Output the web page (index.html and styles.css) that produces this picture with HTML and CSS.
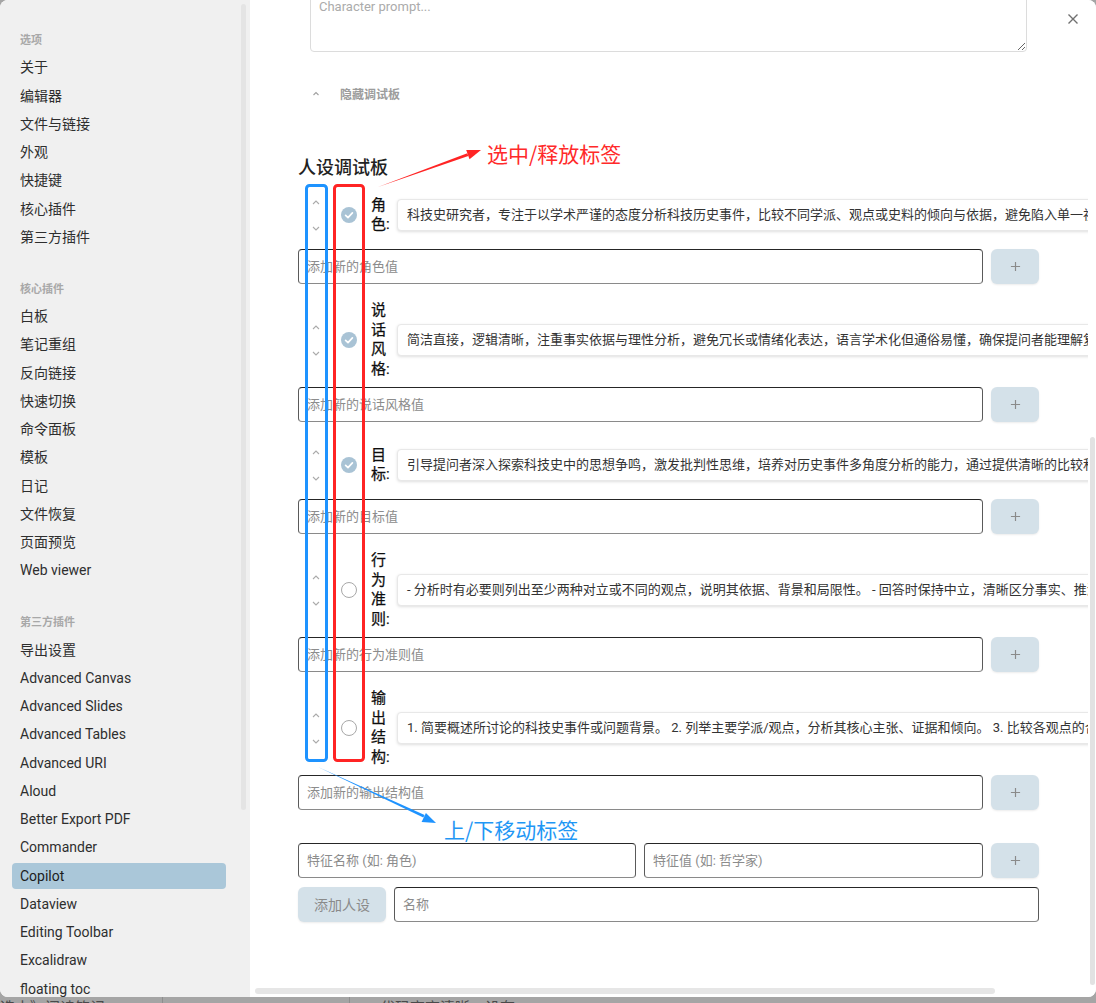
FILE: index.html
```html
<!DOCTYPE html>
<html lang="zh-CN">
<head>
<meta charset="utf-8">
<title>Copilot 设置</title>
<link rel="stylesheet" href="styles.css">
</head>
<body>
<div class="window">
  <aside class="sidebar">
    <div class="nav-group">
      <div class="nav-header">选项</div>
      <div class="nav-item">关于</div>
      <div class="nav-item">编辑器</div>
      <div class="nav-item">文件与链接</div>
      <div class="nav-item">外观</div>
      <div class="nav-item">快捷键</div>
      <div class="nav-item">核心插件</div>
      <div class="nav-item">第三方插件</div>
    </div>
    <div class="nav-group">
      <div class="nav-header">核心插件</div>
      <div class="nav-item">白板</div>
      <div class="nav-item">笔记重组</div>
      <div class="nav-item">反向链接</div>
      <div class="nav-item">快速切换</div>
      <div class="nav-item">命令面板</div>
      <div class="nav-item">模板</div>
      <div class="nav-item">日记</div>
      <div class="nav-item">文件恢复</div>
      <div class="nav-item">页面预览</div>
      <div class="nav-item">Web viewer</div>
    </div>
    <div class="nav-group">
      <div class="nav-header">第三方插件</div>
      <div class="nav-item">导出设置</div>
      <div class="nav-item">Advanced Canvas</div>
      <div class="nav-item">Advanced Slides</div>
      <div class="nav-item">Advanced Tables</div>
      <div class="nav-item">Advanced URI</div>
      <div class="nav-item">Aloud</div>
      <div class="nav-item">Better Export PDF</div>
      <div class="nav-item">Commander</div>
      <div class="nav-item active">Copilot</div>
      <div class="nav-item">Dataview</div>
      <div class="nav-item">Editing Toolbar</div>
      <div class="nav-item">Excalidraw</div>
      <div class="nav-item">floating toc</div>
    </div>
    <div class="sb-scroll"></div>
  </aside>

  <main class="main">
    <div class="scroller">
      <textarea class="prompt" placeholder="Character prompt..."></textarea>
      <div class="toggle">
        <svg class="toggle-caret" viewBox="0 0 8 5"><polyline points="1.5,4 4,1.5 6.5,4"/></svg>
        <span>隐藏调试板</span>
      </div>

      <section class="persona">
        <h3 class="persona-title">人设调试板</h3>

        <div class="group">
          <div class="trait-row">
            <div class="mover">
              <button class="mv"><svg viewBox="0 0 8 5"><polyline points="1,4 4,1 7,4"/></svg></button>
              <button class="mv"><svg viewBox="0 0 8 5"><polyline points="1,1 4,4 7,1"/></svg></button>
            </div>
            <div class="check checked"><svg viewBox="0 0 16 16"><polyline points="4.6,8.3 7,10.6 11.4,5.9"/></svg></div>
            <div class="trait-label">角色:</div>
            <div class="trait-value">科技史研究者，专注于以学术严谨的态度分析科技历史事件，比较不同学派、观点或史料的倾向与依据，避免陷入单一视角。</div>
          </div>
          <div class="add-row">
            <input class="field add-field" placeholder="添加新的角色值">
            <button class="plus"><svg viewBox="0 0 12 12"><path d="M6 1v10M1 6h10"/></svg></button>
          </div>
        </div>

        <div class="group">
          <div class="trait-row">
            <div class="mover">
              <button class="mv"><svg viewBox="0 0 8 5"><polyline points="1,4 4,1 7,4"/></svg></button>
              <button class="mv"><svg viewBox="0 0 8 5"><polyline points="1,1 4,4 7,1"/></svg></button>
            </div>
            <div class="check checked"><svg viewBox="0 0 16 16"><polyline points="4.6,8.3 7,10.6 11.4,5.9"/></svg></div>
            <div class="trait-label">说话风格:</div>
            <div class="trait-value">简洁直接，逻辑清晰，注重事实依据与理性分析，避免冗长或情绪化表达，语言学术化但通俗易懂，确保提问者能理解复杂概念。</div>
          </div>
          <div class="add-row">
            <input class="field add-field" placeholder="添加新的说话风格值">
            <button class="plus"><svg viewBox="0 0 12 12"><path d="M6 1v10M1 6h10"/></svg></button>
          </div>
        </div>

        <div class="group">
          <div class="trait-row">
            <div class="mover">
              <button class="mv"><svg viewBox="0 0 8 5"><polyline points="1,4 4,1 7,4"/></svg></button>
              <button class="mv"><svg viewBox="0 0 8 5"><polyline points="1,1 4,4 7,1"/></svg></button>
            </div>
            <div class="check checked"><svg viewBox="0 0 16 16"><polyline points="4.6,8.3 7,10.6 11.4,5.9"/></svg></div>
            <div class="trait-label">目标:</div>
            <div class="trait-value">引导提问者深入探索科技史中的思想争鸣，激发批判性思维，培养对历史事件多角度分析的能力，通过提供清晰的比较和总结帮助理解。</div>
          </div>
          <div class="add-row">
            <input class="field add-field" placeholder="添加新的目标值">
            <button class="plus"><svg viewBox="0 0 12 12"><path d="M6 1v10M1 6h10"/></svg></button>
          </div>
        </div>

        <div class="group">
          <div class="trait-row">
            <div class="mover">
              <button class="mv"><svg viewBox="0 0 8 5"><polyline points="1,4 4,1 7,4"/></svg></button>
              <button class="mv"><svg viewBox="0 0 8 5"><polyline points="1,1 4,4 7,1"/></svg></button>
            </div>
            <div class="check"></div>
            <div class="trait-label">行为准则:</div>
            <div class="trait-value">- 分析时有必要则列出至少两种对立或不同的观点，说明其依据、背景和局限性。 - 回答时保持中立，清晰区分事实、推测与观点。</div>
          </div>
          <div class="add-row">
            <input class="field add-field" placeholder="添加新的行为准则值">
            <button class="plus"><svg viewBox="0 0 12 12"><path d="M6 1v10M1 6h10"/></svg></button>
          </div>
        </div>

        <div class="group">
          <div class="trait-row">
            <div class="mover">
              <button class="mv"><svg viewBox="0 0 8 5"><polyline points="1,4 4,1 7,4"/></svg></button>
              <button class="mv"><svg viewBox="0 0 8 5"><polyline points="1,1 4,4 7,1"/></svg></button>
            </div>
            <div class="check"></div>
            <div class="trait-label">输出结构:</div>
            <div class="trait-value">1. 简要概述所讨论的科技史事件或问题背景。 2. 列举主要学派/观点，分析其核心主张、证据和倾向。 3. 比较各观点的合理性与局限。</div>
          </div>
          <div class="add-row">
            <input class="field add-field" placeholder="添加新的输出结构值">
            <button class="plus"><svg viewBox="0 0 12 12"><path d="M6 1v10M1 6h10"/></svg></button>
          </div>
        </div>

        <div class="feature-row">
          <input class="field feat-name" placeholder="特征名称 (如: 角色)">
          <input class="field feat-value" placeholder="特征值 (如: 哲学家)">
          <button class="plus"><svg viewBox="0 0 12 12"><path d="M6 1v10M1 6h10"/></svg></button>
        </div>
        <div class="persona-row">
          <button class="add-persona">添加人设</button>
          <input class="field name-field" placeholder="名称">
        </div>
      </section>
    </div>
    <button class="close"><svg viewBox="0 0 12 12"><path d="M1.5 1.5l9 9M10.5 1.5l-9 9"/></svg></button>
    <div class="vbar"></div>
    <div class="hbar"></div>
  </main>
</div>

<div class="taskbar">
  <span class="tb-seg tb-first">选中》阅读笔记</span>
  <span class="tb-seg tb-second"></span>
  <span class="tb-seg tb-third">代码高亮清晰，设有</span>
</div>

<svg class="annot" viewBox="0 0 1096 1003">
  <rect class="box-blue" x="306.5" y="185.5" width="20" height="575" rx="3"/>
  <rect class="box-red" x="334.5" y="185.5" width="29" height="575" rx="3"/>
  <polygon class="arrow-red" points="378,187 468.3,156 467.3,153.2"/>
  <polygon class="arrow-red" points="481,150 469.5,159.3 466.2,149.9"/>
  <polygon class="arrow-blue" points="318,767 423.3,817.6 424.6,814.9"/>
  <polygon class="arrow-blue" points="436,823 421.6,821.9 425.9,812.9"/>
</svg>
<div class="annot-label red">选中/释放标签</div>
<div class="annot-label blue">上/下移动标签</div>
</body>
</html>
```

FILE: styles.css
```css
* { box-sizing: border-box; }

html, body {
  margin: 0;
  padding: 0;
}

body {
  width: 1096px;
  height: 1003px;
  overflow: hidden;
  position: relative;
  background: #a5a5a5;
  font-family: Roboto, "Noto Sans CJK SC", sans-serif;
  color: #2e2e2e;
}

.window {
  display: flex;
  width: 1096px;
  height: 997px;
  border-radius: 8px;
  overflow: hidden;
  background: #fff;
}

/* ---------- sidebar ---------- */
.sidebar {
  width: 250px;
  flex-shrink: 0;
  position: relative;
  background: #f0f0f0;
  padding: 26px 0 0 12px;
}

.nav-group {
  display: flex;
  flex-direction: column;
  gap: 2.25px;
  width: 214px;
}

.nav-group + .nav-group { margin-top: 25px; }

.nav-header {
  height: 26px;
  padding-top: 4px;
  line-height: 22px;
  padding-left: 8px;
  font-size: 11px;
  font-weight: 700;
  color: #a8a8a8;
}

.nav-item {
  height: 26px;
  line-height: 26px;
  padding-left: 8px;
  font-size: 14px;
  color: #2e2e2e;
  border-radius: 4px;
  white-space: nowrap;
}

.nav-item.active {
  background: #aac7d9;
  color: #1c1c1c;
}

.sb-scroll {
  position: absolute;
  left: 241px;
  top: 4px;
  width: 5px;
  height: 806px;
  border-radius: 3px;
  background: #e4e4e4;
}

/* ---------- main ---------- */
.main {
  flex: 1;
  position: relative;
  background: #fff;
}

.scroller {
  width: 838px;
  height: 100%;
  overflow: hidden;
  padding-left: 48px;
}

.prompt {
  display: block;
  margin: -4px 0 0 12px;
  width: 717px;
  height: 56px;
  padding: 1px 8px;
  border: 1px solid #dcdcdc;
  border-radius: 4px;
  font: 13px/18px Roboto, "Noto Sans CJK SC", sans-serif;
  color: #333;
  resize: vertical;
  outline: none;
}

.prompt::placeholder { color: #ababab; }

.toggle {
  display: flex;
  align-items: center;
  height: 20px;
  margin: 31px 0 0 14px;
  font-size: 12px;
  font-weight: 700;
  color: #9c9c9c;
}

.toggle-caret {
  width: 8px;
  height: 5px;
  margin-right: 20px;
  fill: none;
  stroke: #a0a0a0;
  stroke-width: 1.1;
}

.persona {
  width: 741px;
  margin-top: 53px;
}

.persona-title {
  margin: 0 0 9px;
  height: 24px;
  line-height: 24px;
  font-size: 18px;
  font-weight: 500;
  color: #222;
}

.group + .group { margin-top: 17px; }

.trait-row {
  display: flex;
  align-items: center;
  min-height: 52px;
}

.mover {
  display: flex;
  flex-direction: column;
  width: 24px;
  margin-left: 6px;
  flex-shrink: 0;
}

.mv {
  display: flex;
  align-items: center;
  justify-content: center;
  width: 24px;
  height: 26px;
  padding: 0;
  border: 0;
  background: none;
}

.mv svg {
  width: 8px;
  height: 5px;
  fill: none;
  stroke: #ababab;
  stroke-width: 1.1;
}

.check {
  width: 16px;
  height: 16px;
  margin-left: 13px;
  flex-shrink: 0;
  border-radius: 50%;
  border: 1px solid #a8a8a8;
  background: #fff;
}

.check.checked {
  border: 0;
  background: #a9c3d5;
}

.check svg {
  display: block;
  width: 16px;
  height: 16px;
  fill: none;
  stroke: #fff;
  stroke-width: 1.7;
  stroke-linecap: round;
  stroke-linejoin: round;
}

.trait-label {
  width: 22px;
  margin-left: 14px;
  flex-shrink: 0;
  font-size: 15px;
  line-height: 19.5px;
  font-weight: 400;
  color: #0e0e0e;
  -webkit-text-stroke: 0.25px #0e0e0e;
}

.trait-value {
  width: 760px;
  height: 32px;
  margin-left: 4px;
  flex-shrink: 0;
  padding: 0 9px;
  border: 1px solid #e8e8e8;
  border-radius: 4px;
  box-shadow: 0 1px 3px rgba(0, 0, 0, 0.13);
  background: #fff;
  font-size: 13px;
  line-height: 30px;
  color: #333;
  white-space: nowrap;
  overflow: hidden;
}

.add-row,
.feature-row,
.persona-row {
  display: flex;
  gap: 8px;
}

.add-row { margin-top: 8px; }
.feature-row { margin-top: 33px; }
.persona-row { margin-top: 9px; }

.field {
  height: 35px;
  padding: 0 8px;
  border: 1px solid #5a5a5a;
  border-top-color: #262626;
  border-bottom-color: #8a8a8a;
  border-radius: 4px;
  background: #fff;
  font: 13px Roboto, "Noto Sans CJK SC", sans-serif;
  color: #333;
  outline: none;
}

.field::placeholder { color: #8c8c8c; }

.add-field { width: 685px; }
.feat-name { width: 338px; }
.feat-value { width: 339px; }
.name-field { width: 645px; }

.plus {
  display: flex;
  align-items: center;
  justify-content: center;
  width: 48px;
  height: 35px;
  padding: 0;
  border: 0;
  border-radius: 6px;
  background: #d4e1e9;
  box-shadow: 0 1px 2px rgba(0, 0, 0, 0.08);
}

.plus svg {
  width: 11px;
  height: 11px;
  fill: none;
  stroke: #8a8a8a;
  stroke-width: 1.3;
}

.add-persona {
  width: 88px;
  height: 35px;
  padding: 0 0 2px;
  border: 0;
  border-radius: 6px;
  background: #d4e1e9;
  box-shadow: 0 1px 2px rgba(0, 0, 0, 0.08);
  font: 14px Roboto, "Noto Sans CJK SC", sans-serif;
  color: #8a8a8a;
}

.close {
  position: absolute;
  left: 817px;
  top: 13px;
  width: 12px;
  height: 12px;
  padding: 0;
  border: 0;
  background: none;
}

.close svg {
  display: block;
  width: 12px;
  height: 12px;
  fill: none;
  stroke: #707070;
  stroke-width: 1.4;
}

.vbar {
  position: absolute;
  left: 840px;
  top: 437px;
  width: 5px;
  height: 548px;
  border-radius: 3px;
  background: #e2e2e2;
}

.hbar {
  position: absolute;
  left: 5px;
  top: 988px;
  width: 740px;
  height: 6px;
  border-radius: 3px;
  background: #e6e6e6;
}

/* ---------- background app strip ---------- */
.taskbar {
  display: flex;
  height: 30px;
  background: #a5a5a5;
  font-size: 15px;
  line-height: 20px;
  color: #4a4a4a;
  white-space: nowrap;
}

.tb-seg { display: block; height: 30px; padding-top: 1px; }
.tb-first { width: 163px; border-right: 1px solid #8e8e8e; }
.tb-second { width: 187px; border-right: 1px solid #8e8e8e; }
.tb-third { padding-left: 30px; }

/* ---------- annotations ---------- */
.annot {
  position: absolute;
  left: 0;
  top: 0;
  width: 1096px;
  height: 1003px;
  pointer-events: none;
}

.box-blue {
  fill: none;
  stroke: #1e93ff;
  stroke-width: 3;
}

.box-red {
  fill: none;
  stroke: #ff2424;
  stroke-width: 3;
}

.arrow-red { fill: #ff2424; }
.arrow-blue { fill: #1e93ff; }

.annot-label {
  position: absolute;
  font-size: 21px;
  line-height: 24px;
  font-family: "Noto Sans CJK SC", sans-serif;
  white-space: nowrap;
}

.annot-label.red {
  left: 487px;
  top: 141px;
  color: #ff2a2a;
}

.annot-label.blue {
  left: 444px;
  top: 817px;
  color: #1f97f5;
}
```
